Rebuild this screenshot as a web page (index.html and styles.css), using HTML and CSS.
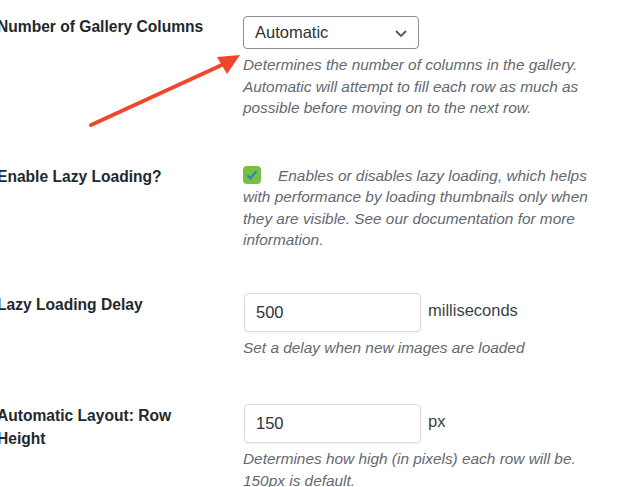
FILE: index.html
```html
<!DOCTYPE html>
<html>
<head>
<meta charset="utf-8">
<link rel="stylesheet" href="styles.css">
</head>
<body>
<div class="settings">
  <div class="row row-columns">
    <div class="label">Number of Gallery Columns</div>
    <div class="field">
      <div class="select">
        <span>Automatic</span>
        <svg class="chev" width="14" height="10" viewBox="0 0 14 10"><path d="M2 3l5 5 5-5" fill="none" stroke="#50575e" stroke-width="1.8"/></svg>
      </div>
      <p class="desc">Determines the number of columns in the gallery. Automatic will attempt to fill each row as much as possible before moving on to the next row.</p>
    </div>
  </div>
  <div class="row row-lazy">
    <div class="label">Enable Lazy Loading?</div>
    <div class="field">
      <p class="desc desc-first"><span class="check"><svg width="18" height="18" viewBox="0 0 18 18"><rect x="0" y="0" width="18" height="18" rx="4" fill="#76bf45"/><path d="M4.5 9.2l3 3 6-7" fill="none" stroke="#2f7fc4" stroke-width="2"/></svg></span>Enables or disables lazy loading, which helps with performance by loading thumbnails only when they are visible. See our documentation for more information.</p>
    </div>
  </div>
  <div class="row row-delay">
    <div class="label">Lazy Loading Delay</div>
    <div class="field">
      <div class="inline">
        <div class="input">500</div>
        <span class="unit">milliseconds</span>
      </div>
      <p class="desc">Set a delay when new images are loaded</p>
    </div>
  </div>
  <div class="row row-height">
    <div class="label">Automatic Layout: Row Height</div>
    <div class="field">
      <div class="inline">
        <div class="input">150</div>
        <span class="unit">px</span>
      </div>
      <p class="desc">Determines how high (in pixels) each row will be. 150px is default.</p>
    </div>
  </div>
</div>
<svg class="arrow" width="620" height="487" viewBox="0 0 620 487">
  <line x1="91" y1="125" x2="224" y2="64" stroke="#f1462c" stroke-width="4" stroke-linecap="round"/>
  <polygon points="217,57 240,55 227,74" fill="#f1462c"/>
</svg>
</body>
</html>
```

FILE: styles.css
```css
html, body {
  margin: 0;
  padding: 0;
  background: #ffffff;
}
body {
  width: 620px;
  height: 487px;
  overflow: hidden;
  position: relative;
  font-family: "Liberation Sans", Arial, sans-serif;
  color: #1d2327;
}
.settings {
  margin-left: -3px;
  display: flex;
  flex-direction: column;
}
.row {
  display: flex;
  align-items: flex-start;
}
.row-columns { padding-top: 16px; }
.row-lazy { padding-top: 46px; }
.row-delay { padding-top: 42px; }
.row-height { padding-top: 46px; }
.label {
  width: 246px;
  flex: none;
  font-size: 15.6px;
  font-weight: bold;
  line-height: 22px;
  color: #23282d;
  padding-right: 30px;
  box-sizing: border-box;
}
.row-columns .label { padding-top: 0; }
.row-lazy .label { padding-top: 1px; }
.row-delay .label { padding-top: 1px; }
.row-height .label { padding-top: 0; padding-right: 70px; line-height: 23px; }
.field {
  width: 354px;
}
.select {
  width: 176px;
  height: 33px;
  box-sizing: border-box;
  border: 1px solid #8c8f94;
  border-radius: 4px;
  display: flex;
  align-items: center;
  justify-content: space-between;
  padding: 0 10px 0 11px;
  font-size: 16.5px;
  color: #2c3338;
}
.chev { display: block; }
.desc {
  margin: 5px 0 0 0;
  font-size: 15.4px;
  line-height: 21.5px;
  font-style: italic;
  color: #646970;
}
.desc-first { margin-top: 0; }
.check {
  display: inline-block;
  width: 18px;
  height: 18px;
  vertical-align: -3px;
  margin-right: 17px;
}
.check svg { display: block; }
.inline {
  display: flex;
  align-items: center;
}
.input {
  width: 177px;
  height: 39px;
  box-sizing: border-box;
  border: 1px solid #dcdcde;
  border-radius: 4px;
  box-shadow: 0 1px 2px rgba(0,0,0,0.06);
  padding: 0 11px;
  display: flex;
  align-items: center;
  font-size: 16.5px;
  color: #2c3338;
  margin-left: 1px;
}
.unit {
  margin-left: 7px;
  font-size: 16.5px;
  color: #3c434a;
  position: relative;
  top: -2px;
}
.arrow {
  position: absolute;
  left: 0;
  top: 0;
  pointer-events: none;
}
```
